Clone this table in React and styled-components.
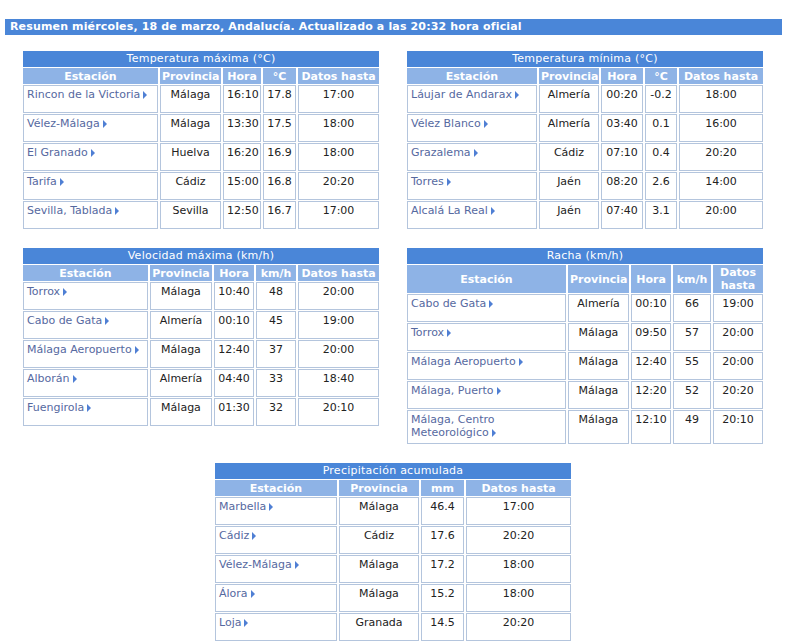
import React from 'react';
import styled, { createGlobalStyle } from 'styled-components';

const GlobalStyle = createGlobalStyle`
    body {
        margin: 0;
        background: #fff;
        font-family: "DejaVu Sans", Verdana, sans-serif;
        font-size: 11px;
        color: #222;
    }
`;

const Page = styled.div`
    width: 777px;
    padding: 19px 0 0 5px;
`;

const TopBar = styled.div`
    background: #4a86d8;
    color: #fff;
    font-weight: bold;
    letter-spacing: 0.15px;
    height: 16px;
    line-height: 16px;
    padding-left: 5px;
    white-space: nowrap;
    overflow: hidden;
`;

const Grid = styled.div`
    display: flex;
    flex-wrap: wrap;
    justify-content: center;
    align-items: flex-start;
    column-gap: 28px;
    row-gap: 18px;
    margin-top: 16px;
    padding-right: 1px;
`;

const Block = styled.div`
    width: 356px;
`;

const Title = styled.div`
    background: #4a86d8;
    color: #fff;
    letter-spacing: 0.25px;
    height: 16px;
    line-height: 16px;
    text-align: center;
`;

const Table = styled.table`
    width: calc(100% + 4px);
    margin: 0 -2px;
    border-collapse: separate;
    border-spacing: 2px 1px;
    table-layout: fixed;
`;

const Col = styled.col`
    width: ${p => p.$w}px;
`;

const Th = styled.th`
    background: #8eb3e6;
    color: #fff;
    font-weight: bold;
    line-height: 13px;
    height: 14px;
    padding: 1px 2px;
    text-align: center;
`;

const Td = styled.td`
    border: 1px solid #b4c5dd;
    padding: 2px 3px 4px;
    height: 20px;
    line-height: 13px;
    vertical-align: top;
    text-align: ${p => (p.$left ? 'left' : 'center')};
    white-space: ${p => (p.$wrap ? 'normal' : 'nowrap')};
`;

const StationLink = styled.a`
    color: #56699f;
    text-decoration: none;
`;

const Arrow = styled.span`
    display: inline-block;
    width: 0;
    height: 0;
    margin-left: 3px;
    border-left: 4px solid #4f7fd4;
    border-top: 4px solid transparent;
    border-bottom: 4px solid transparent;
    vertical-align: -1px;
`;

const tables = [
    {
        title: 'Temperatura máxima (°C)',
        cols: [['Estación', 135], ['Provincia', 61], ['Hora', 38], ['°C', 33], ['Datos hasta', 81]],
        rows: [
            ['Rincon de la Victoria', 'Málaga', '16:10', '17.8', '17:00'],
            ['Vélez-Málaga', 'Málaga', '13:30', '17.5', '18:00'],
            ['El Granado', 'Huelva', '16:20', '16.9', '18:00'],
            ['Tarifa', 'Cádiz', '15:00', '16.8', '20:20'],
            ['Sevilla, Tablada', 'Sevilla', '12:50', '16.7', '17:00'],
        ],
    },
    {
        title: 'Temperatura mínima (°C)',
        cols: [['Estación', 130], ['Provincia', 60], ['Hora', 42], ['°C', 32], ['Datos hasta', 84]],
        rows: [
            ['Láujar de Andarax', 'Almería', '00:20', '-0.2', '18:00'],
            ['Vélez Blanco', 'Almería', '03:40', '0.1', '16:00'],
            ['Grazalema', 'Cádiz', '07:10', '0.4', '20:20'],
            ['Torres', 'Jaén', '08:20', '2.6', '14:00'],
            ['Alcalá La Real', 'Jaén', '07:40', '3.1', '20:00'],
        ],
    },
    {
        title: 'Velocidad máxima (km/h)',
        cols: [['Estación', 125], ['Provincia', 62], ['Hora', 40], ['km/h', 40], ['Datos hasta', 81]],
        rows: [
            ['Torrox', 'Málaga', '10:40', '48', '20:00'],
            ['Cabo de Gata', 'Almería', '00:10', '45', '19:00'],
            ['Málaga Aeropuerto', 'Málaga', '12:40', '37', '20:00'],
            ['Alborán', 'Almería', '04:40', '33', '18:40'],
            ['Fuengirola', 'Málaga', '01:30', '32', '20:10'],
        ],
    },
    {
        title: 'Racha (km/h)',
        cols: [['Estación', 159], ['Provincia', 61], ['Hora', 40], ['km/h', 38], ['Datos hasta', 50]],
        rows: [
            ['Cabo de Gata', 'Almería', '00:10', '66', '19:00'],
            ['Torrox', 'Málaga', '09:50', '57', '20:00'],
            ['Málaga Aeropuerto', 'Málaga', '12:40', '55', '20:00'],
            ['Málaga, Puerto', 'Málaga', '12:20', '52', '20:20'],
            ['Málaga, Centro Meteorológico', 'Málaga', '12:10', '49', '20:10'],
        ],
    },
    {
        title: 'Precipitación acumulada',
        cols: [['Estación', 122], ['Provincia', 80], ['mm', 43], ['Datos hasta', 105]],
        rows: [
            ['Marbella', 'Málaga', '46.4', '17:00'],
            ['Cádiz', 'Cádiz', '17.6', '20:20'],
            ['Vélez-Málaga', 'Málaga', '17.2', '18:00'],
            ['Álora', 'Málaga', '15.2', '18:00'],
            ['Loja', 'Granada', '14.5', '20:20'],
        ],
    },
];

const SummaryTable = ({ title, cols, rows }) => (
    <Block>
        <Title>{title}</Title>
        <Table>
            <colgroup>
                {cols.map(([label, w]) => <Col key={label} $w={w} />)}
            </colgroup>
            <thead>
                <tr>
                    {cols.map(([label]) => <Th key={label}>{label}</Th>)}
                </tr>
            </thead>
            <tbody>
                {rows.map(([station, ...rest]) => (
                    <tr key={station}>
                        <Td $left $wrap={station.length > 20}>
                            <StationLink href="#">{station}</StationLink>
                            <Arrow />
                        </Td>
                        {rest.map((v, i) => <Td key={i}>{v}</Td>)}
                    </tr>
                ))}
            </tbody>
        </Table>
    </Block>
);

export default function App() {
    return (
        <Page>
            <GlobalStyle />
            <TopBar>Resumen miércoles, 18 de marzo, Andalucía. Actualizado a las 20:32 hora oficial</TopBar>
            <Grid>
                {tables.map(t => <SummaryTable key={t.title} {...t} />)}
            </Grid>
        </Page>
    );
}
